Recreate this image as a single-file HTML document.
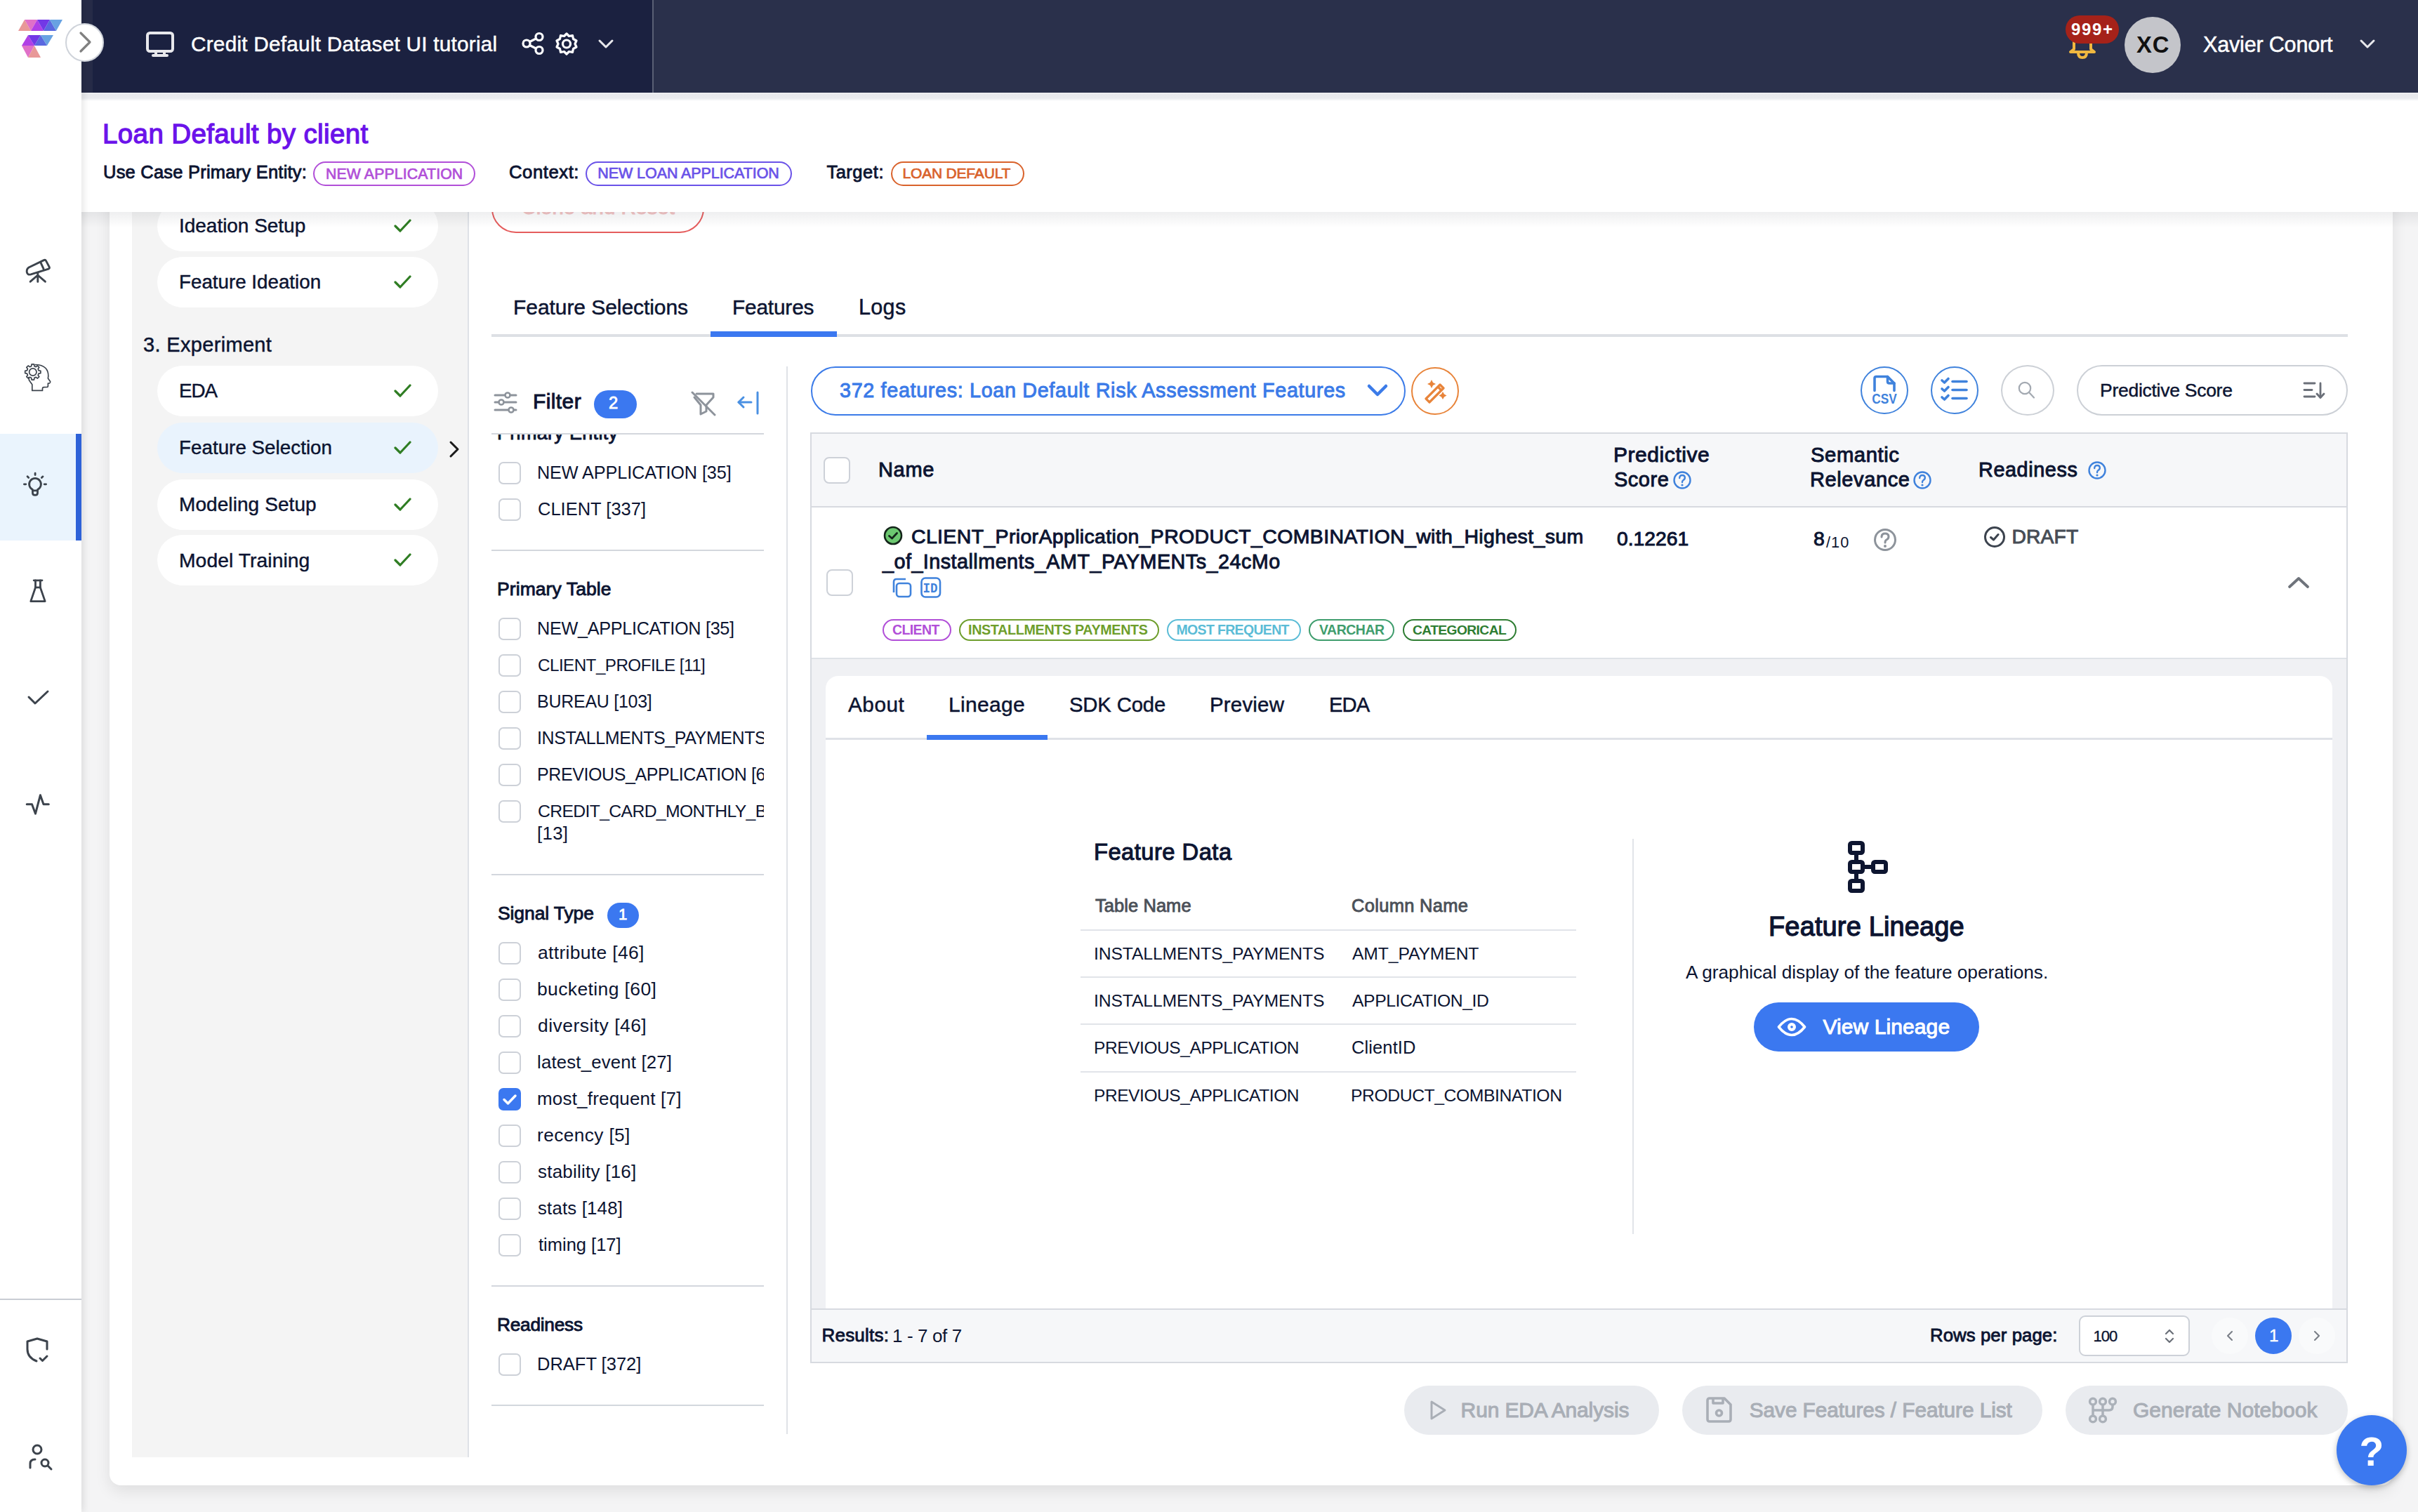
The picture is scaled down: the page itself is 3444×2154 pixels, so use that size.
<!DOCTYPE html>
<html><head><meta charset="utf-8"><title>Feature Selection</title>
<style>
html,body{margin:0;padding:0;width:3444px;height:2154px;overflow:hidden;background:#f4f4f5;font-family:"Liberation Sans",sans-serif}
.t{position:absolute;white-space:pre}
@media (max-width:2400px){html{zoom:0.5}}
</style></head><body>
<div style="position:absolute;left:156px;top:100px;width:3252px;height:2016px;background:#fff;border-radius:0 0 16px 16px;box-shadow:0 8px 22px rgba(0,0,0,0.09)"></div>
<div style="position:absolute;left:188px;top:142px;width:478px;height:1934px;background:#f4f4f4;border-right:2px solid #dfe2e7"></div>
<div style="position:absolute;left:224px;top:286px;width:400px;height:72px;background:#fff;border-radius:36px"></div>
<div style="position:absolute;left:224px;top:366px;width:400px;height:72px;background:#fff;border-radius:36px"></div>
<div style="position:absolute;left:224px;top:521px;width:400px;height:72px;background:#fff;border-radius:36px"></div>
<div style="position:absolute;left:224px;top:601.5px;width:400px;height:72px;background:#e9f3fd;border-radius:36px"></div>
<div style="position:absolute;left:224px;top:683px;width:400px;height:72px;background:#fff;border-radius:36px"></div>
<div style="position:absolute;left:224px;top:762px;width:400px;height:72px;background:#fff;border-radius:36px"></div>
<svg style="position:absolute;left:561px;top:310px" width="26" height="23" viewBox="0 0 26 23"><path d="M2 12 L9 19 L23 4" fill="none" stroke="#2f7d23" stroke-width="3.2" stroke-linecap="round" stroke-linejoin="round"/></svg>
<svg style="position:absolute;left:561px;top:390px" width="26" height="23" viewBox="0 0 26 23"><path d="M2 12 L9 19 L23 4" fill="none" stroke="#2f7d23" stroke-width="3.2" stroke-linecap="round" stroke-linejoin="round"/></svg>
<svg style="position:absolute;left:561px;top:545px" width="26" height="23" viewBox="0 0 26 23"><path d="M2 12 L9 19 L23 4" fill="none" stroke="#2f7d23" stroke-width="3.2" stroke-linecap="round" stroke-linejoin="round"/></svg>
<svg style="position:absolute;left:561px;top:625.5px" width="26" height="23" viewBox="0 0 26 23"><path d="M2 12 L9 19 L23 4" fill="none" stroke="#2f7d23" stroke-width="3.2" stroke-linecap="round" stroke-linejoin="round"/></svg>
<svg style="position:absolute;left:561px;top:707px" width="26" height="23" viewBox="0 0 26 23"><path d="M2 12 L9 19 L23 4" fill="none" stroke="#2f7d23" stroke-width="3.2" stroke-linecap="round" stroke-linejoin="round"/></svg>
<svg style="position:absolute;left:561px;top:786px" width="26" height="23" viewBox="0 0 26 23"><path d="M2 12 L9 19 L23 4" fill="none" stroke="#2f7d23" stroke-width="3.2" stroke-linecap="round" stroke-linejoin="round"/></svg>
<svg style="position:absolute;left:636px;top:626px" width="22" height="28" viewBox="0 0 22 28"><path d="M6 4 L16 14 L6 24" fill="none" stroke="#1a1a1a" stroke-width="3" stroke-linecap="round" stroke-linejoin="round"/></svg>
<div style="position:absolute;left:700px;top:262px;width:303px;height:70px;border:2px solid #e24a4a;border-radius:35px;box-sizing:border-box;opacity:0.9"></div>
<div style="position:absolute;left:700px;top:476px;width:2644px;height:4px;background:#dde0e5"></div>
<div style="position:absolute;left:1012px;top:472px;width:180px;height:8px;background:#3b78f0"></div>
<svg style="position:absolute;left:703px;top:557px" width="34" height="34" viewBox="0 0 34 34"><g stroke="#8d939b" stroke-width="3" stroke-linecap="round" fill="none"><line x1="2" y1="6" x2="32" y2="6"/><line x1="2" y1="16" x2="32" y2="16"/><line x1="2" y1="27" x2="32" y2="27"/></g><g fill="#fff" stroke="#8d939b" stroke-width="2.6"><circle cx="20" cy="6" r="3.5"/><circle cx="11" cy="16" r="3.5"/><circle cx="25" cy="27" r="3.5"/></g></svg>
<div style="position:absolute;left:846px;top:555.5px;width:61px;height:40px;background:#3b78f0;border-radius:20px"></div>
<svg style="position:absolute;left:984px;top:557px" width="36" height="36" viewBox="0 0 36 36"><g fill="none" stroke="#8d939b" stroke-width="3" stroke-linejoin="round" stroke-linecap="round"><path d="M8 4 H32 V9 L22 20 V29 L14 33 V20 L5 9"/><line x1="2" y1="2" x2="34" y2="34"/></g></svg>
<svg style="position:absolute;left:1049px;top:557px" width="34" height="34" viewBox="0 0 34 34"><g fill="none" stroke="#4a90e2" stroke-width="3" stroke-linecap="round" stroke-linejoin="round"><line x1="30" y1="2" x2="30" y2="32"/><line x1="3" y1="16" x2="21" y2="16"/><path d="M10 9 L3 16 L10 23"/></g></svg>
<div style="position:absolute;left:700px;top:617px;width:388px;height:2px;background:#d3d7dd"></div>
<div style="position:absolute;left:1120px;top:522px;width:2px;height:1521px;background:#dfe2e7"></div>
<div style="position:absolute;left:700px;top:619px;width:388px;height:1424px;overflow:hidden"><div style="position:absolute;left:10px;top:39px;width:32px;height:32px;border:2px solid #cdd1d8;border-radius:7px;box-sizing:border-box;background:#fff"></div>
<div style="position:absolute;left:10px;top:91px;width:32px;height:32px;border:2px solid #cdd1d8;border-radius:7px;box-sizing:border-box;background:#fff"></div>
<div style="position:absolute;left:10px;top:261px;width:32px;height:32px;border:2px solid #cdd1d8;border-radius:7px;box-sizing:border-box;background:#fff"></div>
<div style="position:absolute;left:10px;top:313px;width:32px;height:32px;border:2px solid #cdd1d8;border-radius:7px;box-sizing:border-box;background:#fff"></div>
<div style="position:absolute;left:10px;top:365px;width:32px;height:32px;border:2px solid #cdd1d8;border-radius:7px;box-sizing:border-box;background:#fff"></div>
<div style="position:absolute;left:10px;top:417px;width:32px;height:32px;border:2px solid #cdd1d8;border-radius:7px;box-sizing:border-box;background:#fff"></div>
<div style="position:absolute;left:10px;top:469px;width:32px;height:32px;border:2px solid #cdd1d8;border-radius:7px;box-sizing:border-box;background:#fff"></div>
<div style="position:absolute;left:10px;top:521px;width:32px;height:32px;border:2px solid #cdd1d8;border-radius:7px;box-sizing:border-box;background:#fff"></div>
<div style="position:absolute;left:10px;top:723px;width:32px;height:32px;border:2px solid #cdd1d8;border-radius:7px;box-sizing:border-box;background:#fff"></div>
<div style="position:absolute;left:10px;top:775px;width:32px;height:32px;border:2px solid #cdd1d8;border-radius:7px;box-sizing:border-box;background:#fff"></div>
<div style="position:absolute;left:10px;top:827px;width:32px;height:32px;border:2px solid #cdd1d8;border-radius:7px;box-sizing:border-box;background:#fff"></div>
<div style="position:absolute;left:10px;top:879px;width:32px;height:32px;border:2px solid #cdd1d8;border-radius:7px;box-sizing:border-box;background:#fff"></div>
<div style="position:absolute;left:10px;top:983px;width:32px;height:32px;border:2px solid #cdd1d8;border-radius:7px;box-sizing:border-box;background:#fff"></div>
<div style="position:absolute;left:10px;top:1035px;width:32px;height:32px;border:2px solid #cdd1d8;border-radius:7px;box-sizing:border-box;background:#fff"></div>
<div style="position:absolute;left:10px;top:1087px;width:32px;height:32px;border:2px solid #cdd1d8;border-radius:7px;box-sizing:border-box;background:#fff"></div>
<div style="position:absolute;left:10px;top:1139px;width:32px;height:32px;border:2px solid #cdd1d8;border-radius:7px;box-sizing:border-box;background:#fff"></div>
<div style="position:absolute;left:10px;top:1309px;width:32px;height:32px;border:2px solid #cdd1d8;border-radius:7px;box-sizing:border-box;background:#fff"></div>
<div style="position:absolute;left:10px;top:931px;width:32px;height:32px;background:#3b78f0;border-radius:7px"></div>
<svg style="position:absolute;left:10px;top:931px" width="32" height="32" viewBox="0 0 32 32"><path d="M8 16.5 L13.5 22 L24 11" fill="none" stroke="#fff" stroke-width="3.5" stroke-linecap="round" stroke-linejoin="round"/></svg>
<div style="position:absolute;left:0px;top:164px;width:388px;height:2px;background:#d3d7dd"></div>
<div style="position:absolute;left:0px;top:626px;width:388px;height:2px;background:#d3d7dd"></div>
<div style="position:absolute;left:0px;top:1212px;width:388px;height:2px;background:#d3d7dd"></div>
<div style="position:absolute;left:0px;top:1382px;width:388px;height:2px;background:#d3d7dd"></div>
<div style="position:absolute;left:165px;top:667px;width:45px;height:36px;background:#3b78f0;border-radius:18px"></div><div class="t" style="left:8.0px;top:-15.0px;font-size:27.0px;line-height:27.0px;font-weight:400;color:#0c1431;letter-spacing:0.31px;-webkit-text-stroke:0.9px #0c1431">Primary Entity</div>
<div class="t" style="left:65.0px;top:42.0px;font-size:25.25px;line-height:25.25px;font-weight:400;color:#0c1431;letter-spacing:-0.11px">NEW APPLICATION [35]</div>
<div class="t" style="left:66.0px;top:94.0px;font-size:25.5px;line-height:25.5px;font-weight:400;color:#0c1431;letter-spacing:0.00px">CLIENT [337]</div>
<div class="t" style="left:8.0px;top:207.0px;font-size:26.5px;line-height:26.5px;font-weight:400;color:#0c1431;letter-spacing:0.08px;-webkit-text-stroke:0.9px #0c1431">Primary Table</div>
<div class="t" style="left:65.0px;top:264.0px;font-size:25.25px;line-height:25.25px;font-weight:400;color:#0c1431;letter-spacing:-0.32px">NEW_APPLICATION [35]</div>
<div class="t" style="left:66.0px;top:317.0px;font-size:24.25px;line-height:24.25px;font-weight:400;color:#0c1431;letter-spacing:-0.56px">CLIENT_PROFILE [11]</div>
<div class="t" style="left:65.0px;top:368.0px;font-size:25.0px;line-height:25.0px;font-weight:400;color:#0c1431;letter-spacing:-0.27px">BUREAU [103]</div>
<div class="t" style="left:65.0px;top:420.0px;font-size:25.0px;line-height:25.0px;font-weight:400;color:#0c1431;letter-spacing:-0.40px">INSTALLMENTS_PAYMENTS [8]</div>
<div class="t" style="left:65.0px;top:472.0px;font-size:25.0px;line-height:25.0px;font-weight:400;color:#0c1431;letter-spacing:-0.41px">PREVIOUS_APPLICATION [61]</div>
<div class="t" style="left:66.0px;top:525.0px;font-size:24.75px;line-height:24.75px;font-weight:400;color:#0c1431;letter-spacing:-0.65px">CREDIT_CARD_MONTHLY_BALANCE</div>
<div class="t" style="left:65.0px;top:555.5px;font-size:25.75px;line-height:25.75px;font-weight:400;color:#0c1431;letter-spacing:0.33px">[13]</div>
<div class="t" style="left:9.0px;top:669.0px;font-size:26.5px;line-height:26.5px;font-weight:400;color:#0c1431;letter-spacing:-0.10px;-webkit-text-stroke:0.9px #0c1431">Signal Type</div>
<div class="t" style="left:181.0px;top:673.0px;font-size:22.25px;line-height:22.25px;font-weight:400;color:#ffffff;letter-spacing:0.04px;-webkit-text-stroke:0.76px #ffffff">1</div>
<div class="t" style="left:66.0px;top:725.0px;font-size:26.5px;line-height:26.5px;font-weight:400;color:#0c1431;letter-spacing:0.31px">attribute [46]</div>
<div class="t" style="left:65.0px;top:777.0px;font-size:26.5px;line-height:26.5px;font-weight:400;color:#0c1431;letter-spacing:0.38px">bucketing [60]</div>
<div class="t" style="left:66.0px;top:829.0px;font-size:26.5px;line-height:26.5px;font-weight:400;color:#0c1431;letter-spacing:0.46px">diversity [46]</div>
<div class="t" style="left:65.0px;top:882.0px;font-size:25.75px;line-height:25.75px;font-weight:400;color:#0c1431;letter-spacing:0.19px">latest_event [27]</div>
<div class="t" style="left:65.0px;top:933.0px;font-size:26.0px;line-height:26.0px;font-weight:400;color:#0c1431;letter-spacing:0.19px">most_frequent [7]</div>
<div class="t" style="left:65.0px;top:985.0px;font-size:26.25px;line-height:26.25px;font-weight:400;color:#0c1431;letter-spacing:0.40px">recency [5]</div>
<div class="t" style="left:66.0px;top:1037.0px;font-size:26.0px;line-height:26.0px;font-weight:400;color:#0c1431;letter-spacing:0.23px">stability [16]</div>
<div class="t" style="left:66.0px;top:1090.0px;font-size:25.75px;line-height:25.75px;font-weight:400;color:#0c1431;letter-spacing:0.20px">stats [148]</div>
<div class="t" style="left:67.0px;top:1142.0px;font-size:25.5px;line-height:25.5px;font-weight:400;color:#0c1431;letter-spacing:0.00px">timing [17]</div>
<div class="t" style="left:8.0px;top:1255.0px;font-size:26.25px;line-height:26.25px;font-weight:400;color:#0c1431;letter-spacing:-0.25px;-webkit-text-stroke:0.9px #0c1431">Readiness</div>
<div class="t" style="left:65.0px;top:1312.0px;font-size:25.5px;line-height:25.5px;font-weight:400;color:#0c1431;letter-spacing:0.00px">DRAFT [372]</div></div>
<div style="position:absolute;left:1155px;top:522px;width:847px;height:69.5px;border:2px solid #3b7be8;border-radius:35px;box-sizing:border-box"></div>
<svg style="position:absolute;left:1946px;top:546px" width="32" height="22" viewBox="0 0 32 22"><path d="M4 4 L16 16 L28 4" fill="none" stroke="#3b7be8" stroke-width="4.5" stroke-linecap="round" stroke-linejoin="round"/></svg>
<div style="position:absolute;left:2010px;top:523px;width:68px;height:68px;border:2px solid #e8843a;border-radius:50%;box-sizing:border-box"></div>
<svg style="position:absolute;left:2024px;top:537px" width="40" height="40" viewBox="0 0 40 40"><g fill="none" stroke="#e8843a" stroke-width="3.2" stroke-linejoin="round"><path d="M7 31 L27 11 L32 16 L12 36 Z"/><line x1="24" y1="14" x2="29" y2="19"/></g><g fill="#e8843a"><path d="M15 4 L17 8 L21 10 L17 12 L15 16 L13 12 L9 10 L13 8Z"/><path d="M31 21 L33 24.5 L36.5 26.5 L33 28.5 L31 32 L29 28.5 L25.5 26.5 L29 24.5Z"/></g></svg>
<div style="position:absolute;left:2650px;top:522px;width:68px;height:68px;border:2px solid #3f82dc;border-radius:50%;box-sizing:border-box"></div>
<svg style="position:absolute;left:2662px;top:532px" width="44" height="46" viewBox="0 0 44 46"><g fill="none" stroke="#3f82dc" stroke-width="3.6" stroke-linecap="round" stroke-linejoin="round"><path d="M8 24.5 V7 Q8 4.5 10.5 4.5 H26.5 L36 14 V24.5"/><path d="M26.5 4.5 V11.5 Q26.5 14 29 14 H36"/></g><text x="4.2" y="43.2" textLength="35.5" lengthAdjust="spacingAndGlyphs" font-family="Liberation Sans" font-weight="700" font-size="20.5" fill="#3f82dc">CSV</text></svg>
<div style="position:absolute;left:2750px;top:522px;width:68px;height:68px;border:2px solid #3f82dc;border-radius:50%;box-sizing:border-box"></div>
<svg style="position:absolute;left:2762px;top:534px" width="44" height="44" viewBox="0 0 44 44"><g fill="none" stroke="#3f82dc" stroke-width="3.6" stroke-linecap="round" stroke-linejoin="round"><path d="M4 8 L7.5 11 L13 5.5"/><path d="M4 20 L7.5 23 L13 17.5"/><path d="M4 32 L7.5 35 L13 29.5"/><line x1="19" y1="9.5" x2="39" y2="9.5"/><line x1="19" y1="21.5" x2="39" y2="21.5"/><line x1="19" y1="33.5" x2="39" y2="33.5"/></g></svg>
<div style="position:absolute;left:2850px;top:520px;width:76px;height:72px;border:2px solid #ccd0d6;border-radius:50%;box-sizing:border-box"></div>
<svg style="position:absolute;left:2872px;top:540px" width="32" height="32" viewBox="0 0 32 32"><g fill="none" stroke="#a3a9b1" stroke-width="2.2" stroke-linecap="round"><circle cx="12" cy="13" r="8.2"/><line x1="18" y1="19" x2="25" y2="26.5"/></g></svg>
<div style="position:absolute;left:2958px;top:520px;width:386px;height:72px;border:2px solid #ccd0d6;border-radius:36px;box-sizing:border-box"></div>
<svg style="position:absolute;left:3280px;top:543px" width="34" height="28" viewBox="0 0 34 28"><g fill="none" stroke="#6a6f78" stroke-width="2.8" stroke-linecap="round" stroke-linejoin="round"><line x1="2" y1="3" x2="17" y2="3"/><line x1="2" y1="12.5" x2="13" y2="12.5"/><line x1="2" y1="22" x2="17" y2="22"/><line x1="25" y1="3" x2="25" y2="23"/><path d="M20 18 L25 23.5 L30 18"/></g></svg>
<div style="position:absolute;left:1154px;top:616px;width:2190px;height:1326px;border:2px solid #d7dae0;box-sizing:border-box;background:#fff"></div>
<div style="position:absolute;left:1156px;top:618px;width:2186px;height:103px;background:#f6f7f9"></div>
<div style="position:absolute;left:1156px;top:721px;width:2186px;height:2px;background:#d7dae0"></div>
<div style="position:absolute;left:1173px;top:651px;width:38px;height:38px;border:2px solid #cdd1d8;border-radius:8px;box-sizing:border-box;background:#fff"></div>
<svg style="position:absolute;left:2383px;top:671px" width="26" height="26" viewBox="0 0 26 26"><g fill="none" stroke="#3f82dc" stroke-width="2.4"><circle cx="13" cy="13" r="11.5"/><path d="M9.2 10 Q9.2 6 13 6 Q16.8 6 16.8 9.6 Q16.8 12 14.3 13.2 Q13 13.9 13 16" stroke-linecap="round"/></g><circle cx="13" cy="20" r="1.6" fill="#3f82dc"/></svg>
<svg style="position:absolute;left:2724.5px;top:671px" width="26" height="26" viewBox="0 0 26 26"><g fill="none" stroke="#3f82dc" stroke-width="2.4"><circle cx="13" cy="13" r="11.5"/><path d="M9.2 10 Q9.2 6 13 6 Q16.8 6 16.8 9.6 Q16.8 12 14.3 13.2 Q13 13.9 13 16" stroke-linecap="round"/></g><circle cx="13" cy="20" r="1.6" fill="#3f82dc"/></svg>
<svg style="position:absolute;left:2973.5px;top:657px" width="26" height="26" viewBox="0 0 26 26"><g fill="none" stroke="#3f82dc" stroke-width="2.4"><circle cx="13" cy="13" r="11.5"/><path d="M9.2 10 Q9.2 6 13 6 Q16.8 6 16.8 9.6 Q16.8 12 14.3 13.2 Q13 13.9 13 16" stroke-linecap="round"/></g><circle cx="13" cy="20" r="1.6" fill="#3f82dc"/></svg>
<div style="position:absolute;left:1177px;top:811px;width:38px;height:38px;border:2px solid #cdd1d8;border-radius:8px;box-sizing:border-box;background:#fff"></div>
<svg style="position:absolute;left:1258px;top:749px" width="28" height="28" viewBox="0 0 28 28"><circle cx="14" cy="14" r="12" fill="#6cc870" stroke="#14251a" stroke-width="2.6"/><path d="M8.5 14.5 L12.5 18 L19.5 10.5" fill="none" stroke="#14251a" stroke-width="2.8" stroke-linecap="round" stroke-linejoin="round"/></svg>
<svg style="position:absolute;left:1270px;top:823px" width="30" height="30" viewBox="0 0 30 30"><g fill="none" stroke="#3f82dc" stroke-width="2.6" stroke-linejoin="round"><rect x="7" y="8" width="20" height="19" rx="4"/><path d="M3 21 V6 Q3 2 7 2 H20"/></g></svg>
<svg style="position:absolute;left:1310px;top:821px" width="32" height="32" viewBox="0 0 32 32"><rect x="2.5" y="2.5" width="26.5" height="27" rx="5.5" fill="none" stroke="#3f82dc" stroke-width="2.6"/><text x="4.6" y="22.6" textLength="21" lengthAdjust="spacingAndGlyphs" font-family="Liberation Mono" font-weight="700" font-size="20.5" fill="#3f82dc">ID</text></svg>
<div style="position:absolute;left:1257px;top:882px;width:98px;height:30.5px;border:2px solid #b14fd8;border-radius:16px;box-sizing:border-box"></div>
<div style="position:absolute;left:1365.5px;top:882px;width:285.5px;height:30.5px;border:2px solid #6e9e2c;border-radius:16px;box-sizing:border-box"></div>
<div style="position:absolute;left:1662px;top:882px;width:191px;height:30.5px;border:2px solid #5bbcd6;border-radius:16px;box-sizing:border-box"></div>
<div style="position:absolute;left:1863.5px;top:882px;width:122.5px;height:30.5px;border:2px solid #3f9d6d;border-radius:16px;box-sizing:border-box"></div>
<div style="position:absolute;left:1997.5px;top:882px;width:162.5px;height:30.5px;border:2px solid #2e7d32;border-radius:16px;box-sizing:border-box"></div>
<svg style="position:absolute;left:2668px;top:752px" width="34" height="34" viewBox="0 0 34 34"><g fill="none" stroke="#8d939b" stroke-width="3"><circle cx="17" cy="17" r="14.5"/><path d="M12 13 Q12 8 17 8 Q22 8 22 12.5 Q22 15.5 19 17 Q17 18 17 21" stroke-linecap="round"/></g><circle cx="17" cy="26" r="2" fill="#8d939b"/></svg>
<svg style="position:absolute;left:2825px;top:749px" width="32" height="32" viewBox="0 0 32 32"><circle cx="16" cy="16" r="13.5" fill="none" stroke="#3c434e" stroke-width="3"/><path d="M10.5 16.5 L14.5 20 L21 12.5" fill="none" stroke="#3c434e" stroke-width="3" stroke-linecap="round" stroke-linejoin="round"/></svg>
<svg style="position:absolute;left:3256px;top:818px" width="36" height="24" viewBox="0 0 36 24"><path d="M5 18 L18 6 L31 18" fill="none" stroke="#6e737b" stroke-width="3.8" stroke-linecap="round" stroke-linejoin="round"/></svg>
<div style="position:absolute;left:1156px;top:937px;width:2186px;height:2px;background:#dfe2e7"></div>
<div style="position:absolute;left:1156px;top:939px;width:2186px;height:925px;background:#f0f1f4"></div>
<div style="position:absolute;left:1176px;top:963px;width:2146px;height:901px;background:#fff;border-radius:18px 18px 0 0"></div>
<div style="position:absolute;left:1176px;top:1051px;width:2146px;height:3px;background:#dfe2e7"></div>
<div style="position:absolute;left:1320px;top:1047px;width:172px;height:7px;background:#3b78f0"></div>
<div style="position:absolute;left:1539px;top:1324px;width:706px;height:2px;background:#e1e4e9"></div>
<div style="position:absolute;left:1539px;top:1391px;width:706px;height:2px;background:#e1e4e9"></div>
<div style="position:absolute;left:1539px;top:1458px;width:706px;height:2px;background:#e1e4e9"></div>
<div style="position:absolute;left:1539px;top:1526px;width:706px;height:2px;background:#e1e4e9"></div>
<div style="position:absolute;left:2324.5px;top:1195px;width:2px;height:563px;background:#e1e4e9"></div>
<svg style="position:absolute;left:2628px;top:1194px" width="66" height="82" viewBox="0 0 66 82"><g fill="none" stroke="#0d1530" stroke-width="6" stroke-linejoin="round"><rect x="7" y="7" width="18" height="14" rx="2.5"/><rect x="7" y="34" width="18" height="14" rx="2.5"/><rect x="7" y="61" width="18" height="14" rx="2.5"/><rect x="40" y="34" width="18" height="14" rx="2.5"/><line x1="16" y1="21" x2="16" y2="34"/><line x1="16" y1="48" x2="16" y2="61"/><line x1="25" y1="41" x2="40" y2="41"/></g></svg>
<div style="position:absolute;left:2498px;top:1428px;width:321px;height:70px;background:#3b78f0;border-radius:35px"></div>
<svg style="position:absolute;left:2530px;top:1446px" width="44" height="34" viewBox="0 0 44 34"><g fill="none" stroke="#fff" stroke-width="3.6"><path d="M3.5 17 Q22 -6 40.5 17 Q22 40 3.5 17 Z" stroke-linejoin="round"/><circle cx="22" cy="17" r="3.9" stroke-width="4.2"/></g></svg>
<div style="position:absolute;left:1156px;top:1864px;width:2186px;height:76px;background:#f6f7f9;border-top:2px solid #d7dae0;box-sizing:border-box"></div>
<div style="position:absolute;left:2960.5px;top:1874px;width:158.5px;height:58px;background:#fff;border:2px solid #cdd1d8;border-radius:9px;box-sizing:border-box"></div>
<svg style="position:absolute;left:3080px;top:1892px" width="20" height="24" viewBox="0 0 20 24"><g fill="none" stroke="#6a6f78" stroke-width="2.2" stroke-linecap="round" stroke-linejoin="round"><path d="M5 8 L10 3 L15 8"/><path d="M5 15 L10 20 L15 15"/></g></svg>
<div style="position:absolute;left:3150px;top:1877px;width:52px;height:52px;background:#f9fafb;border-radius:50%"></div>
<div style="position:absolute;left:3274px;top:1877px;width:52px;height:52px;background:#f9fafb;border-radius:50%"></div>
<div style="position:absolute;left:3212px;top:1877px;width:52px;height:52px;background:#3b78f0;border-radius:50%"></div>
<svg style="position:absolute;left:3166px;top:1892px" width="20" height="22" viewBox="0 0 20 22"><path d="M13 5 L7 11 L13 17" fill="none" stroke="#7a7f87" stroke-width="2.1" stroke-linecap="round" stroke-linejoin="round"/></svg>
<svg style="position:absolute;left:3290px;top:1892px" width="20" height="22" viewBox="0 0 20 22"><path d="M7 5 L13 11 L7 17" fill="none" stroke="#7a7f87" stroke-width="2.1" stroke-linecap="round" stroke-linejoin="round"/></svg>
<div style="position:absolute;left:2000px;top:1973.5px;width:363px;height:70.5px;background:#e9ebef;border-radius:36px"></div>
<div style="position:absolute;left:2395.5px;top:1973.5px;width:513.5px;height:70.5px;background:#e9ebef;border-radius:36px"></div>
<div style="position:absolute;left:2941.5px;top:1973.5px;width:402.5px;height:70.5px;background:#e9ebef;border-radius:36px"></div>
<svg style="position:absolute;left:2034px;top:1994px" width="28" height="30" viewBox="0 0 28 30"><path d="M5 3 L24 15 L5 27 Z" fill="none" stroke="#a9aeb6" stroke-width="3" stroke-linejoin="round"/></svg>
<svg style="position:absolute;left:2428px;top:1989px" width="42" height="40" viewBox="0 0 42 40"><g fill="none" stroke="#a9aeb6" stroke-width="3.6" stroke-linejoin="round"><path d="M4 6 Q4 3 7 3 H28 L37 12 V33 Q37 36 34 36 H7 Q4 36 4 33 Z"/><path d="M12 3 V10 H26 V3"/><circle cx="20.5" cy="24" r="4"/></g></svg>
<svg style="position:absolute;left:2972px;top:1988px" width="46" height="42" viewBox="0 0 46 42"><g fill="none" stroke="#abb1b9" stroke-width="3.5"><circle cx="9" cy="8.7" r="4.4"/><circle cx="23" cy="8.7" r="4.4"/><circle cx="37" cy="8.7" r="4.4"/><circle cx="9" cy="33.4" r="4.4"/><circle cx="23" cy="33.4" r="4.4"/><path d="M9 13.1 V29"/><path d="M23 13.1 V29"/><path d="M37 13.1 V16 Q37 21 32 21 H9"/></g></svg>
<div class="t" style="left:255.0px;top:307.6px;font-size:28.0px;line-height:28.0px;font-weight:400;color:#0c1431;letter-spacing:-0.03px;-webkit-text-stroke:0.44px #0c1431">Ideation Setup</div>
<div class="t" style="left:255.0px;top:388.0px;font-size:27.75px;line-height:27.75px;font-weight:400;color:#0c1431;letter-spacing:0.00px;-webkit-text-stroke:0.44px #0c1431">Feature Ideation</div>
<div class="t" style="left:255.0px;top:542.8px;font-size:27.75px;line-height:27.75px;font-weight:400;color:#0c1431;letter-spacing:-1.00px;-webkit-text-stroke:0.44px #0c1431">EDA</div>
<div class="t" style="left:255.0px;top:624.0px;font-size:27.75px;line-height:27.75px;font-weight:400;color:#0c1431;letter-spacing:0.03px;-webkit-text-stroke:0.44px #0c1431">Feature Selection</div>
<div class="t" style="left:255.0px;top:704.5px;font-size:28.0px;line-height:28.0px;font-weight:400;color:#0c1431;letter-spacing:0.08px;-webkit-text-stroke:0.44px #0c1431">Modeling Setup</div>
<div class="t" style="left:255.0px;top:783.5px;font-size:28.25px;line-height:28.25px;font-weight:400;color:#0c1431;letter-spacing:0.08px;-webkit-text-stroke:0.44px #0c1431">Model Training</div>
<div class="t" style="left:204.0px;top:477.0px;font-size:29.0px;line-height:29.0px;font-weight:400;color:#0c1431;letter-spacing:0.33px;-webkit-text-stroke:0.46px #0c1431">3. Experiment</div>
<div class="t" style="left:742.5px;top:281.0px;font-size:29.25px;line-height:29.25px;font-weight:400;color:#f2c4c4;letter-spacing:0.04px;-webkit-text-stroke:0.99px #f2c4c4">Clone and Reset</div>
<div class="t" style="left:731.0px;top:423.0px;font-size:30.0px;line-height:30.0px;font-weight:400;color:#0c1431;letter-spacing:-0.06px;-webkit-text-stroke:0.48px #0c1431">Feature Selections</div>
<div class="t" style="left:1043.0px;top:423.0px;font-size:29.75px;line-height:29.75px;font-weight:400;color:#0c1431;letter-spacing:-0.14px;-webkit-text-stroke:0.48px #0c1431">Features</div>
<div class="t" style="left:1223.0px;top:422.0px;font-size:30.5px;line-height:30.5px;font-weight:400;color:#0c1431;letter-spacing:0.33px;-webkit-text-stroke:0.48px #0c1431">Logs</div>
<div class="t" style="left:759.0px;top:557.0px;font-size:30.0px;line-height:30.0px;font-weight:400;color:#0c1431;letter-spacing:0.40px;-webkit-text-stroke:0.97px #0c1431">Filter</div>
<div class="t" style="left:867.0px;top:562.0px;font-size:23.75px;line-height:23.75px;font-weight:400;color:#ffffff;letter-spacing:0.04px;-webkit-text-stroke:0.81px #ffffff">2</div>
<div class="t" style="left:1196.0px;top:542.0px;font-size:28.75px;line-height:28.75px;font-weight:400;color:#3a7ae8;letter-spacing:0.66px;-webkit-text-stroke:0.93px #3a7ae8">372 features: Loan Default Risk Assessment Features</div>
<div class="t" style="left:2991.0px;top:542.5px;font-size:26.5px;line-height:26.5px;font-weight:400;color:#0c1431;letter-spacing:-0.27px;-webkit-text-stroke:0.43px #0c1431">Predictive Score</div>
<div class="t" style="left:1251.0px;top:655.0px;font-size:29.0px;line-height:29.0px;font-weight:400;color:#0c1431;letter-spacing:0.67px;-webkit-text-stroke:0.95px #0c1431">Name</div>
<div class="t" style="left:2298.0px;top:633.0px;font-size:30.0px;line-height:30.0px;font-weight:400;color:#0c1431;letter-spacing:0.56px;-webkit-text-stroke:0.97px #0c1431">Predictive</div>
<div class="t" style="left:2299.0px;top:669.0px;font-size:29.0px;line-height:29.0px;font-weight:400;color:#0c1431;letter-spacing:0.50px;-webkit-text-stroke:0.95px #0c1431">Score</div>
<div class="t" style="left:2579.0px;top:634.0px;font-size:29.25px;line-height:29.25px;font-weight:400;color:#0c1431;letter-spacing:0.57px;-webkit-text-stroke:0.97px #0c1431">Semantic</div>
<div class="t" style="left:2578.0px;top:669.0px;font-size:29.0px;line-height:29.0px;font-weight:400;color:#0c1431;letter-spacing:0.62px;-webkit-text-stroke:0.95px #0c1431">Relevance</div>
<div class="t" style="left:2818.0px;top:655.0px;font-size:28.75px;line-height:28.75px;font-weight:400;color:#0c1431;letter-spacing:0.62px;-webkit-text-stroke:0.95px #0c1431">Readiness</div>
<div class="t" style="left:1298.0px;top:749.5px;font-size:28.5px;line-height:28.5px;font-weight:400;color:#0c1431;letter-spacing:0.34px;-webkit-text-stroke:0.95px #0c1431">CLIENT_PriorApplication_PRODUCT_COMBINATION_with_Highest_sum</div>
<div class="t" style="left:1257.0px;top:786.0px;font-size:28.75px;line-height:28.75px;font-weight:400;color:#0c1431;letter-spacing:0.47px;-webkit-text-stroke:0.95px #0c1431">_of_Installments_AMT_PAYMENTs_24cMo</div>
<div class="t" style="left:2303.0px;top:753.0px;font-size:28.25px;line-height:28.25px;font-weight:400;color:#0c1431;letter-spacing:0.00px;-webkit-text-stroke:0.97px #0c1431">0.12261</div>
<div class="t" style="left:2583.0px;top:753.0px;font-size:28.5px;line-height:28.5px;font-weight:400;color:#0c1431;letter-spacing:0.05px;-webkit-text-stroke:0.97px #0c1431">8</div>
<div class="t" style="left:2601.0px;top:762.0px;font-size:21.75px;line-height:21.75px;font-weight:400;color:#0c1431;letter-spacing:1.00px">/10</div>
<div class="t" style="left:2865.5px;top:750.0px;font-size:28.25px;line-height:28.25px;font-weight:400;color:#464c55;letter-spacing:0.12px;-webkit-text-stroke:0.95px #464c55">DRAFT</div>
<div class="t" style="left:1271.0px;top:888.0px;font-size:19.5px;line-height:19.5px;font-weight:700;color:#b14fd8;letter-spacing:-0.60px">CLIENT</div>
<div class="t" style="left:1379.0px;top:888.0px;font-size:19.75px;line-height:19.75px;font-weight:700;color:#6e9e2c;letter-spacing:-0.35px">INSTALLMENTS PAYMENTS</div>
<div class="t" style="left:1675.5px;top:888.0px;font-size:19.5px;line-height:19.5px;font-weight:700;color:#5bbcd6;letter-spacing:-0.67px">MOST FREQUENT</div>
<div class="t" style="left:1879.0px;top:888.0px;font-size:19.5px;line-height:19.5px;font-weight:700;color:#3f9d6d;letter-spacing:-0.50px">VARCHAR</div>
<div class="t" style="left:2012.0px;top:888.0px;font-size:19.25px;line-height:19.25px;font-weight:700;color:#2e7d32;letter-spacing:-0.60px">CATEGORICAL</div>
<div class="t" style="left:1208.0px;top:989.0px;font-size:29.75px;line-height:29.75px;font-weight:400;color:#0c1431;letter-spacing:0.50px;-webkit-text-stroke:0.47px #0c1431">About</div>
<div class="t" style="left:1351.0px;top:989.0px;font-size:30.0px;line-height:30.0px;font-weight:400;color:#0c1431;letter-spacing:0.33px;-webkit-text-stroke:0.47px #0c1431">Lineage</div>
<div class="t" style="left:1523.0px;top:990.0px;font-size:29.25px;line-height:29.25px;font-weight:400;color:#0c1431;letter-spacing:-0.14px;-webkit-text-stroke:0.47px #0c1431">SDK Code</div>
<div class="t" style="left:1723.0px;top:989.0px;font-size:29.5px;line-height:29.5px;font-weight:400;color:#0c1431;letter-spacing:0.17px;-webkit-text-stroke:0.47px #0c1431">Preview</div>
<div class="t" style="left:1893.0px;top:990.0px;font-size:29.25px;line-height:29.25px;font-weight:400;color:#0c1431;letter-spacing:-1.00px;-webkit-text-stroke:0.47px #0c1431">EDA</div>
<div class="t" style="left:1558.0px;top:1198.0px;font-size:32.75px;line-height:32.75px;font-weight:400;color:#0c1431;letter-spacing:0.45px;-webkit-text-stroke:1.09px #0c1431">Feature Data</div>
<div class="t" style="left:1560.0px;top:1278.0px;font-size:25.5px;line-height:25.5px;font-weight:400;color:#4b5058;letter-spacing:0.06px;-webkit-text-stroke:0.86px #4b5058">Table Name</div>
<div class="t" style="left:1925.0px;top:1278.0px;font-size:25.5px;line-height:25.5px;font-weight:400;color:#4b5058;letter-spacing:0.30px;-webkit-text-stroke:0.86px #4b5058">Column Name</div>
<div class="t" style="left:1558.0px;top:1347.0px;font-size:24.75px;line-height:24.75px;font-weight:400;color:#0c1431;letter-spacing:-0.15px">INSTALLMENTS_PAYMENTS</div>
<div class="t" style="left:1926.0px;top:1347.0px;font-size:24.75px;line-height:24.75px;font-weight:400;color:#0c1431;letter-spacing:-0.15px">AMT_PAYMENT</div>
<div class="t" style="left:1558.0px;top:1414.0px;font-size:24.75px;line-height:24.75px;font-weight:400;color:#0c1431;letter-spacing:-0.15px">INSTALLMENTS_PAYMENTS</div>
<div class="t" style="left:1926.0px;top:1414.0px;font-size:24.75px;line-height:24.75px;font-weight:400;color:#0c1431;letter-spacing:-0.42px">APPLICATION_ID</div>
<div class="t" style="left:1558.0px;top:1481.0px;font-size:24.5px;line-height:24.5px;font-weight:400;color:#0c1431;letter-spacing:-0.42px">PREVIOUS_APPLICATION</div>
<div class="t" style="left:1925.0px;top:1480.0px;font-size:25.5px;line-height:25.5px;font-weight:400;color:#0c1431;letter-spacing:0.11px">ClientID</div>
<div class="t" style="left:1558.0px;top:1549.0px;font-size:24.5px;line-height:24.5px;font-weight:400;color:#0c1431;letter-spacing:-0.42px">PREVIOUS_APPLICATION</div>
<div class="t" style="left:1924.0px;top:1549.0px;font-size:24.75px;line-height:24.75px;font-weight:400;color:#0c1431;letter-spacing:-0.44px">PRODUCT_COMBINATION</div>
<div class="t" style="left:2519.0px;top:1301.0px;font-size:38.0px;line-height:38.0px;font-weight:400;color:#0c1431;letter-spacing:0.14px;-webkit-text-stroke:1.28px #0c1431">Feature Lineage</div>
<div class="t" style="left:2401.0px;top:1372.0px;font-size:26.25px;line-height:26.25px;font-weight:400;color:#0c1431;letter-spacing:-0.04px">A graphical display of the feature operations.</div>
<div class="t" style="left:2596.5px;top:1447.6px;font-size:30.0px;line-height:30.0px;font-weight:400;color:#ffffff;letter-spacing:0.09px;-webkit-text-stroke:1.02px #ffffff">View Lineage</div>
<div class="t" style="left:1170.5px;top:1888.5px;font-size:26.0px;line-height:26.0px;font-weight:400;color:#0c1431;letter-spacing:0.21px;-webkit-text-stroke:0.88px #0c1431">Results:</div>
<div class="t" style="left:1271.0px;top:1889.5px;font-size:26.0px;line-height:26.0px;font-weight:400;color:#0c1431;letter-spacing:-0.39px">1 - 7 of 7</div>
<div class="t" style="left:2749.0px;top:1889.5px;font-size:25.75px;line-height:25.75px;font-weight:400;color:#0c1431;letter-spacing:0.08px;-webkit-text-stroke:0.88px #0c1431">Rows per page:</div>
<div class="t" style="left:2981.5px;top:1892.5px;font-size:22.0px;line-height:22.0px;font-weight:400;color:#0c1431;letter-spacing:-1.00px;-webkit-text-stroke:0.35px #0c1431">100</div>
<div class="t" style="left:3232.0px;top:1891.0px;font-size:24.25px;line-height:24.25px;font-weight:400;color:#ffffff;letter-spacing:0.04px;-webkit-text-stroke:0.39px #ffffff">1</div>
<div class="t" style="left:2080.6px;top:1993.7px;font-size:30.0px;line-height:30.0px;font-weight:400;color:#a9aeb6;letter-spacing:-0.13px;-webkit-text-stroke:1.02px #a9aeb6">Run EDA Analysis</div>
<div class="t" style="left:2491.8px;top:1993.7px;font-size:29.75px;line-height:29.75px;font-weight:400;color:#a9aeb6;letter-spacing:-0.05px;-webkit-text-stroke:1.02px #a9aeb6">Save Features / Feature List</div>
<div class="t" style="left:3038.0px;top:1993.7px;font-size:30.0px;line-height:30.0px;font-weight:400;color:#a9aeb6;letter-spacing:0.04px;-webkit-text-stroke:1.02px #a9aeb6">Generate Notebook</div>
<div style="position:absolute;left:116px;top:142px;width:3328px;height:160px;background:#fff"></div>
<div style="position:absolute;left:116px;top:302px;width:3328px;height:22px;background:linear-gradient(rgba(20,25,40,0.07),rgba(20,25,40,0))"></div>
<div style="position:absolute;left:446px;top:229.5px;width:231px;height:35px;border:2px solid #b14fd8;border-radius:18px;box-sizing:border-box"></div>
<div style="position:absolute;left:834px;top:229.5px;width:293.5px;height:35px;border:2px solid #6a52e8;border-radius:18px;box-sizing:border-box"></div>
<div style="position:absolute;left:1268.5px;top:229.5px;width:190px;height:35px;border:2px solid #d9622b;border-radius:18px;box-sizing:border-box"></div>
<div class="t" style="left:146.0px;top:172.0px;font-size:38.5px;line-height:38.5px;font-weight:400;color:#6b12ea;letter-spacing:0.38px;-webkit-text-stroke:1.28px #6b12ea">Loan Default by client</div>
<div class="t" style="left:147.0px;top:233.0px;font-size:25.5px;line-height:25.5px;font-weight:400;color:#0c1431;letter-spacing:0.22px;-webkit-text-stroke:0.86px #0c1431">Use Case Primary Entity:</div>
<div class="t" style="left:464.0px;top:237.5px;font-size:21.25px;line-height:21.25px;font-weight:400;color:#b14fd8;letter-spacing:0.14px;-webkit-text-stroke:0.71px #b14fd8">NEW APPLICATION</div>
<div class="t" style="left:725.0px;top:233.3px;font-size:25.75px;line-height:25.75px;font-weight:400;color:#0c1431;letter-spacing:0.51px;-webkit-text-stroke:0.84px #0c1431">Context:</div>
<div class="t" style="left:851.3px;top:237.4px;font-size:21.5px;line-height:21.5px;font-weight:400;color:#6a52e8;letter-spacing:-0.08px;-webkit-text-stroke:0.73px #6a52e8">NEW LOAN APPLICATION</div>
<div class="t" style="left:1177.4px;top:233.3px;font-size:25.5px;line-height:25.5px;font-weight:400;color:#0c1431;letter-spacing:0.52px;-webkit-text-stroke:0.84px #0c1431">Target:</div>
<div class="t" style="left:1285.5px;top:236.4px;font-size:21.0px;line-height:21.0px;font-weight:400;color:#d9622b;letter-spacing:-0.19px;-webkit-text-stroke:0.73px #d9622b">LOAN DEFAULT</div>
<div style="position:absolute;left:116px;top:132px;width:3328px;height:12px;background:linear-gradient(#f4f5f7 0px,#e8e9ed 2px,#eaebef 8px,#ffffff 12px)"></div>
<div style="position:absolute;left:116px;top:0px;width:3328px;height:132px;background:#2a304b"></div>
<div style="position:absolute;left:116px;top:0px;width:813px;height:132px;background:#1b2140"></div>
<div style="position:absolute;left:116px;top:0px;width:16px;height:132px;background:#262b47"></div>
<div style="position:absolute;left:929px;top:0px;width:2px;height:132px;background:#5a6075"></div>
<svg style="position:absolute;left:206px;top:43px" width="44" height="40" viewBox="0 0 44 40"><g fill="none" stroke="#e8e8ec" stroke-width="4" stroke-linejoin="round" stroke-linecap="round"><rect x="4" y="4" width="36" height="26" rx="3.5"/><line x1="16" y1="30" x2="16" y2="35"/><line x1="28" y1="30" x2="28" y2="35"/><line x1="12" y1="36" x2="32" y2="36"/></g></svg>
<svg style="position:absolute;left:742px;top:45px" width="34" height="34" viewBox="0 0 34 34"><g fill="none" stroke="#fff" stroke-width="3.2"><circle cx="26" cy="7.5" r="5"/><circle cx="8" cy="17" r="5"/><circle cx="26" cy="26.5" r="5"/><line x1="12.5" y1="14.5" x2="21.5" y2="10"/><line x1="12.5" y1="19.5" x2="21.5" y2="24"/></g></svg>
<svg style="position:absolute;left:788px;top:43px" width="38" height="38" viewBox="0 0 38 38"><g fill="none" stroke="#fff" stroke-width="3.2" stroke-linejoin="round"><path d="M19 3 L22.5 6.5 L27.5 5.5 L28.5 10.5 L33 13 L31 17.5 L33 22 L28.5 24.5 L27.5 29.5 L22.5 28.5 L19 32 L15.5 28.5 L10.5 29.5 L9.5 24.5 L5 22 L7 17.5 L5 13 L9.5 10.5 L10.5 5.5 L15.5 6.5 Z" transform="translate(0,2)"/><circle cx="19" cy="19.5" r="5.5"/></g></svg>
<svg style="position:absolute;left:851px;top:54px" width="24" height="18" viewBox="0 0 24 18"><path d="M3 4 L12 13 L21 4" fill="none" stroke="#e8e8ec" stroke-width="3" stroke-linecap="round" stroke-linejoin="round"/></svg>
<svg style="position:absolute;left:2944px;top:52px" width="44" height="32" viewBox="0 0 44 32"><g fill="none" stroke="#f0b840" stroke-width="4" stroke-linejoin="round" stroke-linecap="round"><path d="M10 2 V18 L5 22 H39 L34 18 V2"/><path d="M16 23 Q16 30 22 30 Q28 30 28 23"/></g></svg>
<div style="position:absolute;left:2942px;top:22px;width:76px;height:40px;background:#a52219;border-radius:20px"></div>
<div style="position:absolute;left:3026px;top:24px;width:80px;height:80px;background:#c4c5ca;border-radius:50%"></div>
<svg style="position:absolute;left:3360px;top:54px" width="24" height="18" viewBox="0 0 24 18"><path d="M3 4 L12 13 L21 4" fill="none" stroke="#e8e8ec" stroke-width="3" stroke-linecap="round" stroke-linejoin="round"/></svg>
<div class="t" style="left:272.0px;top:48.0px;font-size:29.75px;line-height:29.75px;font-weight:400;color:#ffffff;letter-spacing:0.24px;-webkit-text-stroke:0.47px #ffffff">Credit Default Dataset UI tutorial</div>
<div class="t" style="left:2950.0px;top:30.0px;font-size:24.0px;line-height:24.0px;font-weight:700;color:#ffffff;letter-spacing:1.67px">999+</div>
<div class="t" style="left:3043.0px;top:47.5px;font-size:32.75px;line-height:32.75px;font-weight:700;color:#111111;letter-spacing:1.00px">XC</div>
<div class="t" style="left:3138.0px;top:47.7px;font-size:30.5px;line-height:30.5px;font-weight:400;color:#ffffff;letter-spacing:-0.17px;-webkit-text-stroke:0.5px #ffffff">Xavier Conort</div>
<div style="position:absolute;left:0px;top:0px;width:116px;height:2154px;background:#fff;box-shadow:3px 0 10px rgba(0,0,0,0.10)"></div>
<div style="position:absolute;left:0px;top:618px;width:116px;height:152px;background:#eaf4fd"></div>
<div style="position:absolute;left:108px;top:618px;width:8px;height:152px;background:#2e62d8"></div>
<div style="position:absolute;left:0px;top:1850px;width:116px;height:2px;background:#c9cdd4"></div>
<svg style="position:absolute;left:0px;top:0px" width="116" height="100" viewBox="0 0 116 100"><polygon points="26,44 44,44 35,28" fill="#e89898"/><polygon points="35,28 53,28 44,44" fill="#e070c8"/><polygon points="44,44 62,44 53,28" fill="#b040e6"/><polygon points="53,28 71,28 62,44" fill="#7238e6"/><polygon points="62,44 80,44 71,28" fill="#5a68e0"/><polygon points="71,28 89,28 80,44" fill="#68a2e2"/><polygon points="31,65 49,65 40,50" fill="#b040e6"/><polygon points="40,50 58,50 49,65" fill="#7238e6"/><polygon points="49,65 67,65 58,50" fill="#5a68e0"/><polygon points="58,50 76,50 67,65" fill="#68a2e2"/><polygon points="31,65 49,65 40,82" fill="#e070c8"/><polygon points="40,82 58,82 49,65" fill="#e89898"/></svg>
<svg style="position:absolute;left:24px;top:360px" width="60" height="50" viewBox="0 0 60 50"><g fill="none" stroke="#3c434c" stroke-width="2.9" stroke-linecap="round" stroke-linejoin="round"><path d="M17 21 L38.5 10.6 Q40.5 9.6 41.6 11.6 L46.2 20.4 Q47 22.3 45 23.2 L20 30.8 Q15 32.2 14.2 27.6 Q13.8 23 17 21 Z"/><line x1="34" y1="14.2" x2="38" y2="22.8"/><path d="M29.8 28.6 V41.4 M29.8 32 L19.2 41.2 M29.8 32 L40.4 41.2"/></g></svg>
<svg style="position:absolute;left:24px;top:508px" width="60" height="60" viewBox="0 0 60 60"><g fill="none" stroke="#3c434c" stroke-width="1.7" stroke-linejoin="round" stroke-linecap="round"><polygon points="31.13,19.86 33.87,20.32 33.87,23.68 31.13,24.14 30.20,26.38 31.82,28.64 29.44,31.02 27.18,29.40 24.94,30.33 24.48,33.07 21.12,33.07 20.66,30.33 18.42,29.40 16.16,31.02 13.78,28.64 15.40,26.38 14.47,24.14 11.73,23.68 11.73,20.32 14.47,19.86 15.40,17.62 13.78,15.36 16.16,12.98 18.42,14.60 20.66,13.67 21.12,10.93 24.48,10.93 24.94,13.67 27.18,14.60 29.44,12.98 31.82,15.36 30.20,17.62"/><circle cx="22.80" cy="22.00" r="5.2"/><path d="M26.2 11.5 Q36 11.5 41 16.5 Q45 21 44.8 27.8 L44.4 31 L47.6 35.5 Q48 37.5 46.6 38 L44.4 38.2 V41.8 Q44.4 43.5 42.6 43.5 L38.5 43.6 Q36.5 43.8 36.5 45.5 V48.4 H21.8 V39.7 L17.5 33.8 L16.8 29.5"/></g></svg>
<svg style="position:absolute;left:24px;top:664px" width="60" height="50" viewBox="0 0 60 50"><g fill="none" stroke="#3c434c" stroke-width="2.8" stroke-linecap="round" stroke-linejoin="round"><path d="M22.5 33.4 A8.4 8.4 0 1 1 29.5 33.4 L29.5 38.5 Q29.5 41.3 26 41.3 Q22.5 41.3 22.5 38.5 Z"/><line x1="22.5" y1="34.8" x2="29.5" y2="34.8"/><line x1="26.09" y1="12.60" x2="26.11" y2="10.20"/><line x1="16.75" y1="16.55" x2="15.05" y2="14.85"/><line x1="35.35" y1="16.54" x2="37.05" y2="14.86"/><line x1="12.80" y1="25.80" x2="10.40" y2="25.80"/><line x1="39.20" y1="25.80" x2="41.60" y2="25.80"/></g></svg>
<svg style="position:absolute;left:24px;top:816px" width="60" height="50" viewBox="0 0 60 50"><g fill="none" stroke="#3c434c" stroke-width="2.8" stroke-linecap="round" stroke-linejoin="round"><line x1="24.2" y1="10.8" x2="36" y2="10.8"/><path d="M26.5 11 V21 L19.8 40.6 H40.2 L33.4 21 V11"/><line x1="26.5" y1="20.8" x2="33.4" y2="20.8"/></g></svg>
<svg style="position:absolute;left:38px;top:981px" width="34" height="26" viewBox="0 0 34 26"><path d="M3 12 L12 21 L30 4" fill="none" stroke="#3c434c" stroke-width="3" stroke-linecap="round" stroke-linejoin="round"/></svg>
<svg style="position:absolute;left:24px;top:1120px" width="60" height="50" viewBox="0 0 60 50"><path d="M14.2 25.8 H21.5 L26.5 39.2 L33.4 12.8 L38 25.8 H45.3" fill="none" stroke="#3c434c" stroke-width="3" stroke-linecap="round" stroke-linejoin="round"/></svg>
<svg style="position:absolute;left:35px;top:1905px" width="38" height="38" viewBox="0 0 38 38"><g fill="none" stroke="#3c434c" stroke-width="3" stroke-linecap="round" stroke-linejoin="round"><path d="M17 34 Q4 29 4 17 V6 L18 2 L32 6 V17"/><path d="M22 30 L25.5 33.5 L32 27"/></g></svg>
<svg style="position:absolute;left:40px;top:2057px" width="36" height="40" viewBox="0 0 36 40"><g fill="none" stroke="#3c434c" stroke-width="3" stroke-linecap="round" stroke-linejoin="round"><circle cx="13" cy="8" r="6"/><path d="M3 34 V28 Q3 22 10 22"/><circle cx="24" cy="27" r="5"/><line x1="28" y1="31" x2="33" y2="36"/></g></svg>
<div style="position:absolute;left:92.5px;top:32.5px;width:55px;height:55px;background:#fff;border:2px solid #cfd3da;border-radius:50%;box-sizing:border-box"></div>
<svg style="position:absolute;left:108px;top:42px" width="26" height="36" viewBox="0 0 26 36"><path d="M7 5 L20 18 L7 31" fill="none" stroke="#808080" stroke-width="3.2" stroke-linecap="round" stroke-linejoin="round"/></svg>
<div style="position:absolute;left:3328px;top:2016px;width:100px;height:100px;background:#3b78f0;border-radius:50%;box-shadow:0 3px 8px rgba(0,0,0,0.25)"></div>
<div class="t" style="left:3328px;top:2036px;width:100px;text-align:center;font-size:57px;line-height:64px;font-weight:700;color:#fff">?</div>
</body></html>
